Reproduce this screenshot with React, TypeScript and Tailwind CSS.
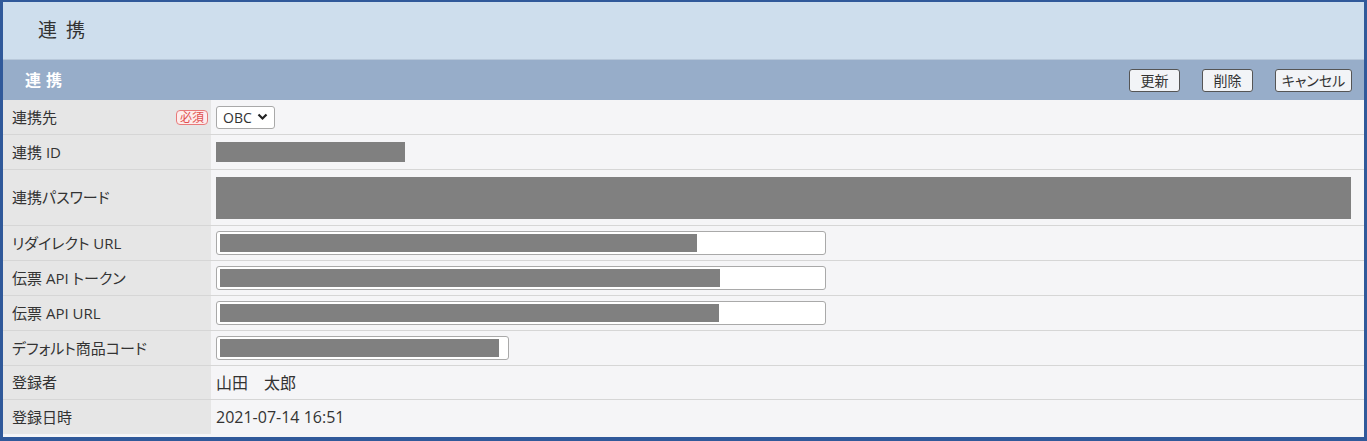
import { ReactNode } from 'react'

function Row({ label, h = 'h-[35px]', badge, children }: { label: string; h?: string; badge?: boolean; children?: ReactNode }) {
  return (
    <div className={`grid grid-cols-[208px_1fr] border-b border-[#d6d6d6] ${h}`}>
      <div className="flex items-center justify-between bg-[#e6e6e6] pl-[9px] pr-[3px] text-[15px] text-[#333]">
        <span>{label}</span>
        {badge && (
          <span className="rounded-[4px] border border-[#e87a7a] bg-[#fdecec] px-[3px] text-[12px] leading-[13px] text-[#e05050]">必須</span>
        )}
      </div>
      <div className="flex items-center bg-[#f5f5f7] pl-[5px] text-[16px] text-[#333]">{children}</div>
    </div>
  )
}

function Field({ w, bar }: { w: string; bar: string }) {
  return (
    <div className={`flex h-[24px] items-center rounded-[3px] border border-[#a9a9a9] bg-white pl-[3px] ${w}`}>
      <div className={`h-[18px] bg-[#808080] ${bar}`} />
    </div>
  )
}

export default function App() {
  return (
    <div className="h-[441px] w-[1367px] border-b-4 border-l-3 border-r-3 border-t-2 border-[#30599a] bg-[#f5f5f7] font-['Open_Sans','Noto_Sans_CJK_JP',sans-serif] [font-feature-settings:'palt']">
      <div className="flex h-[58px] items-center border-b border-[#b8c8da] bg-[#cedeed] pl-[35px] text-[19px] tracking-[9px] text-[#333]">
        連携
      </div>
      <div className="flex h-[40px] items-center justify-between bg-[#97adc9] pl-[22px] pr-[12px]">
        <span className="text-[16px] font-bold tracking-[5px] text-white">連携</span>
        <div className="flex gap-[22px] text-[14px] text-[#333]">
          <button className="h-[23px] w-[51px] rounded-[3px] border border-[#555] bg-[#f2f4f7]">更新</button>
          <button className="h-[23px] w-[51px] rounded-[3px] border border-[#555] bg-[#f2f4f7]">削除</button>
          <button className="h-[23px] w-[77px] rounded-[3px] border border-[#555] bg-[#f2f4f7]">キャンセル</button>
        </div>
      </div>
      <Row label="連携先" badge>
        <div className="flex h-[23px] w-[59px] items-center gap-[5px] rounded-[3px] border border-[#a9a9a9] bg-white px-[6px] text-[14px]">
          OBC
          <svg width="11" height="8" viewBox="0 0 11 8"><path d="M1.5 1.5l4 4 4-4" fill="none" stroke="#222" strokeWidth="2.2" /></svg>
        </div>
      </Row>
      <Row label="連携 ID">
        <div className="h-[20px] w-[189px] bg-[#808080]" />
      </Row>
      <Row label="連携パスワード" h="h-[56px]">
        <div className="h-[42px] w-[1135px] bg-[#808080]" />
      </Row>
      <Row label="リダイレクト URL">
        <Field w="w-[610px]" bar="w-[477px]" />
      </Row>
      <Row label="伝票 API トークン">
        <Field w="w-[610px]" bar="w-[500px]" />
      </Row>
      <Row label="伝票 API URL">
        <Field w="w-[610px]" bar="w-[499px]" />
      </Row>
      <Row label="デフォルト商品コード">
        <Field w="w-[293px]" bar="w-[279px]" />
      </Row>
      <Row label="登録者" h="h-[34px]">
        山田　太郎
      </Row>
      <div className="grid h-[34px] grid-cols-[208px_1fr]">
        <div className="flex items-center bg-[#e6e6e6] pl-[9px] text-[15px] text-[#333]">登録日時</div>
        <div className="flex items-center bg-[#f5f5f7] pl-[5px] text-[16px] text-[#333]">2021-07-14 16:51</div>
      </div>
    </div>
  )
}
